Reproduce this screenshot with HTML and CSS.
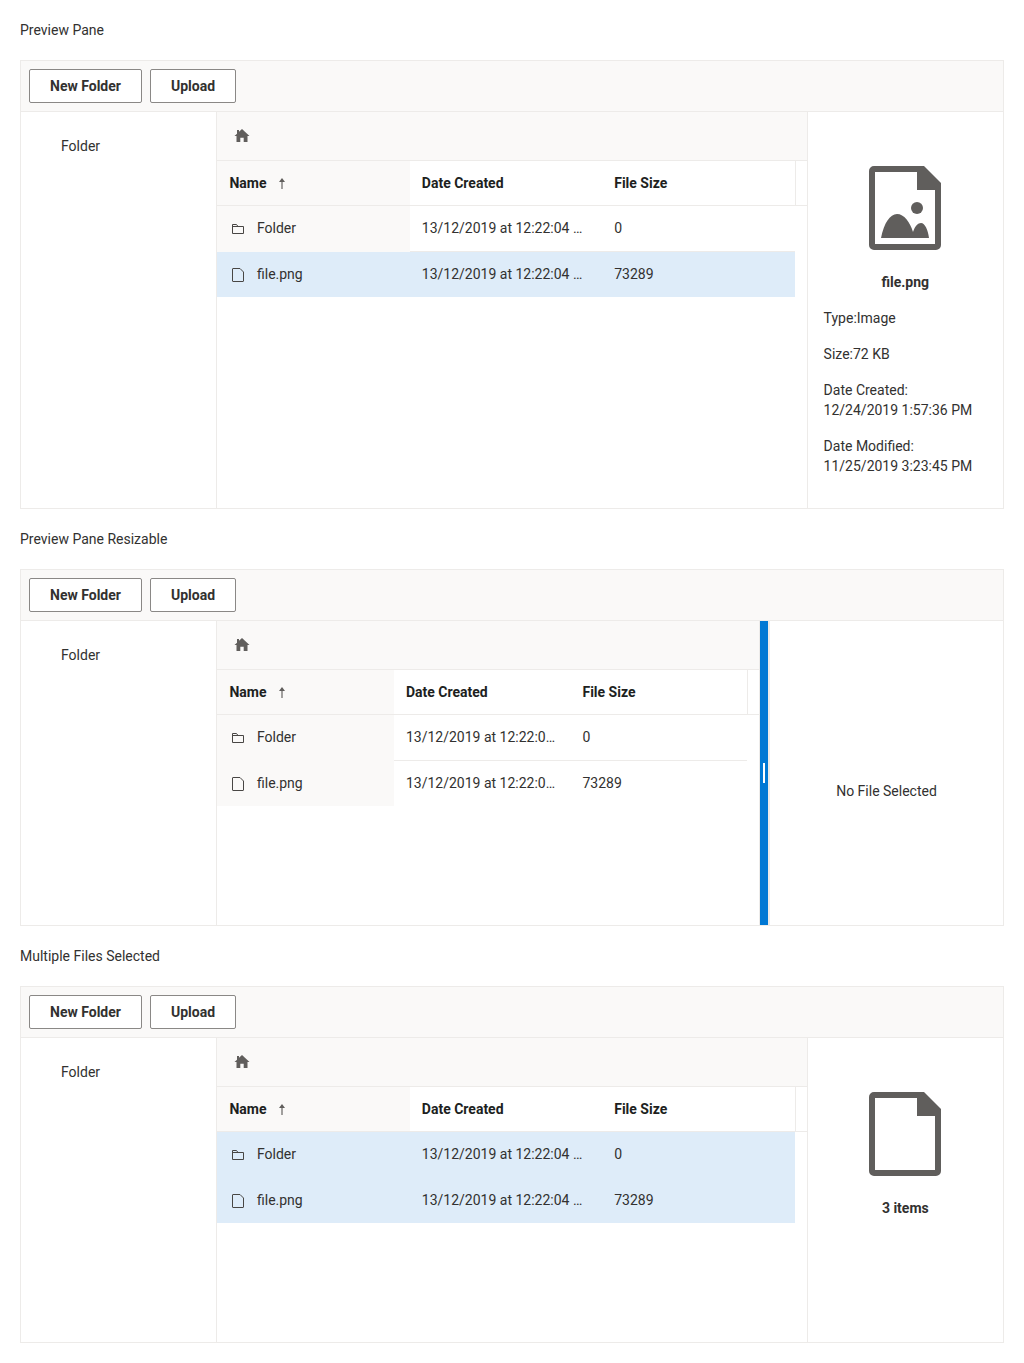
FILE: index.html
```html
<!DOCTYPE html>
<html lang="en">
<head>
<meta charset="utf-8">
<title>File Manager</title>
<link rel="stylesheet" href="styles.css">
</head>
<body>
<svg class="defs" width="0" height="0" aria-hidden="true">
  <symbol id="i-home" viewBox="0 0 16 16"><path d="M8 2 15.500 9H13.500V15H9.700V10.800H6.300V15H2.500V9H.5L3 6.700V3H5V4.800Z"/></symbol>
  <symbol id="i-folder" viewBox="0 0 14 12"><path class="line" d="M1.500 10.500V1.500H5.500L7 3.500H12.500V10.500ZM1.500 3.500H7"/></symbol>
  <symbol id="i-page" viewBox="0 0 14 16"><path class="line" d="M2 14.500a.5.500 0 0 1-.5-.5V2a.5.500 0 0 1 .5-.5H9L12.500 5V14a.5.500 0 0 1-.5.500Z"/></symbol>
  <symbol id="i-sort" viewBox="0 0 8 11"><path class="line" d="M4 11V1.500"/><path class="solid" d="M4 0 7 4H1Z"/></symbol>
  <symbol id="i-big-image" viewBox="0 0 72 84"><path fill-rule="evenodd" d="M5 0H55L72 17V79a5 5 0 0 1-5 5H5a5 5 0 0 1-5-5V5a5 5 0 0 1 5-5ZM6 6V78H66V24H48V6Z"/><circle cx="48" cy="42" r="6"/><path d="M12 72C15 57 21 48 28 48C35 48 41 56 44 66C46 60 49 57 52 57C56 57 59 64 60 72Z"/></symbol>
  <symbol id="i-big-page" viewBox="0 0 72 84"><path fill-rule="evenodd" d="M5 0H55L72 17V79a5 5 0 0 1-5 5H5a5 5 0 0 1-5-5V5a5 5 0 0 1 5-5ZM6 6V78H66V24H48V6Z"/></symbol>
</svg>

<h2 class="title">Preview Pane</h2>
<section class="fm fm-tall">
  <div class="toolbar"><button class="btn">New Folder</button><button class="btn">Upload</button></div>
  <div class="body">
    <nav class="tree">Folder</nav>
    <div class="main">
      <div class="crumb"><svg class="home"><use href="#i-home"/></svg></div>
      <div class="head">
        <div class="hc hc-name">Name <svg class="sort"><use href="#i-sort"/></svg></div>
        <div class="hc">Date Created</div>
        <div class="hc">File Size</div>
        <div class="gutter"></div>
      </div>
      <div class="list">
        <div class="row">
          <div class="c c-name"><svg class="ic-folder"><use href="#i-folder"/></svg>Folder</div>
          <div class="c"><span class="trunc">13/12/2019 at 12:22:04 PM</span></div>
          <div class="c">0</div>
        </div>
        <div class="row sel">
          <div class="c c-name"><svg class="ic-page"><use href="#i-page"/></svg>file.png</div>
          <div class="c"><span class="trunc">13/12/2019 at 12:22:04 PM</span></div>
          <div class="c">73289</div>
        </div>
      </div>
    </div>
    <aside class="preview">
      <svg class="big"><use href="#i-big-image"/></svg>
      <div class="pname">file.png</div>
      <div class="meta">
        <p>Type:Image</p>
        <p>Size:72 KB</p>
        <p>Date Created:<br>12/24/2019 1:57:36 PM</p>
        <p>Date Modified:<br>11/25/2019 3:23:45 PM</p>
      </div>
    </aside>
  </div>
</section>

<h2 class="title">Preview Pane Resizable</h2>
<section class="fm">
  <div class="toolbar"><button class="btn">New Folder</button><button class="btn">Upload</button></div>
  <div class="body">
    <nav class="tree">Folder</nav>
    <div class="main main-bordered">
      <div class="crumb"><svg class="home"><use href="#i-home"/></svg></div>
      <div class="head">
        <div class="hc hc-name">Name <svg class="sort"><use href="#i-sort"/></svg></div>
        <div class="hc">Date Created</div>
        <div class="hc">File Size</div>
        <div class="gutter"></div>
      </div>
      <div class="list">
        <div class="row">
          <div class="c c-name"><svg class="ic-folder"><use href="#i-folder"/></svg>Folder</div>
          <div class="c"><span class="trunc">13/12/2019 at 12:22:04 PM</span></div>
          <div class="c">0</div>
        </div>
        <div class="row">
          <div class="c c-name"><svg class="ic-page"><use href="#i-page"/></svg>file.png</div>
          <div class="c"><span class="trunc">13/12/2019 at 12:22:04 PM</span></div>
          <div class="c">73289</div>
        </div>
      </div>
    </div>
    <div class="splitter"><span class="grip"></span></div>
    <aside class="preview preview-wide">
      <div class="pnone">No File Selected</div>
    </aside>
  </div>
</section>

<h2 class="title">Multiple Files Selected</h2>
<section class="fm">
  <div class="toolbar"><button class="btn">New Folder</button><button class="btn">Upload</button></div>
  <div class="body">
    <nav class="tree">Folder</nav>
    <div class="main">
      <div class="crumb"><svg class="home"><use href="#i-home"/></svg></div>
      <div class="head">
        <div class="hc hc-name">Name <svg class="sort"><use href="#i-sort"/></svg></div>
        <div class="hc">Date Created</div>
        <div class="hc">File Size</div>
        <div class="gutter"></div>
      </div>
      <div class="list">
        <div class="row sel">
          <div class="c c-name"><svg class="ic-folder"><use href="#i-folder"/></svg>Folder</div>
          <div class="c"><span class="trunc">13/12/2019 at 12:22:04 PM</span></div>
          <div class="c">0</div>
        </div>
        <div class="row sel">
          <div class="c c-name"><svg class="ic-page"><use href="#i-page"/></svg>file.png</div>
          <div class="c"><span class="trunc">13/12/2019 at 12:22:04 PM</span></div>
          <div class="c">73289</div>
        </div>
      </div>
    </div>
    <aside class="preview">
      <svg class="big"><use href="#i-big-page"/></svg>
      <div class="pname">3 items</div>
    </aside>
  </div>
</section>
</body>
</html>
```
FILE: styles.css
```css
* { box-sizing: border-box; }
html, body { background: #fff; }
body {
  margin: 0;
  padding: 0 20px 20px;
  font: 400 14px/20px Roboto, "Liberation Sans", sans-serif;
  color: #323130;
}
.defs { position: absolute; }
.title {
  margin: 0;
  height: 60px;
  display: flex;
  align-items: center;
  font: inherit;
}
.fm {
  height: 357px;
  border: 1px solid #edebe9;
  display: flex;
  flex-direction: column;
}
.fm-tall { height: 449px; }
.toolbar {
  flex: none;
  display: flex;
  gap: 8px;
  padding: 8px;
  height: 51px;
  background: #faf9f8;
  border-bottom: 1px solid #edebe9;
}
.btn {
  height: 34px;
  padding: 0 20px;
  background: #fff;
  border: 1px solid #8a8886;
  border-radius: 2px;
  font: 700 14px/20px Roboto, "Liberation Sans", sans-serif;
  color: #323130;
}
.body { flex: 1; display: flex; min-height: 0; }
.tree {
  flex: none;
  width: 20%;
  padding: 24px 0 0 40px;
  border-right: 1px solid #edebe9;
}
.main { flex: 1; min-width: 0; display: flex; flex-direction: column; }
.main-bordered { border-right: 1px solid #edebe9; }
.crumb {
  flex: none;
  height: 49px;
  padding: 15px 0 0 16.6px;
  background: #faf9f8;
  border-bottom: 1px solid #edebe9;
}
.home { display: block; width: 16px; height: 16px; fill: #605e5c; }
.head, .row {
  display: grid;
  grid-template-columns: 1fr 1fr 1fr;
}
.head {
  flex: none;
  height: 45px;
  grid-template-columns: 1fr 1fr 1fr 12px;
  border-bottom: 1px solid #edebe9;
}
.hc {
  display: flex;
  align-items: center;
  padding-left: 12px;
  font-weight: 700;
  color: #201f1e;
  min-width: 0;
}
.hc-name { background: #faf9f8; }
.gutter { border-left: 1px solid #edebe9; }
.list { margin-right: 12px; }
.row { height: 46px; border-bottom: 1px solid #edebe9; }
.row:last-child { height: 45px; border-bottom: 0; }
.row.sel { background: #deecf9; border-bottom-color: #deecf9; }
.c {
  display: flex;
  align-items: center;
  padding: 0 12px 1px;
  min-width: 0;
}
.c-name { background: #faf9f8; }
.row:not(:last-child) .c-name { margin-bottom: -1px; padding-bottom: 2px; }
.sel .c-name { background: transparent; }
.trunc { display: block; overflow: hidden; white-space: nowrap; text-overflow: ellipsis; }
.sort { width: 8px; height: 11px; margin-left: 12px; }
.line { fill: none; stroke: #484644; stroke-width: 1; }
.solid { fill: #605e5c; }
.sort .line { stroke: #605e5c; }
.ic-folder { flex: none; width: 14px; height: 12px; margin: 1px 12px 0 1.6px; }
.ic-page { flex: none; width: 14px; height: 16px; margin: 1px 12px 0 1.6px; }
.preview {
  flex: none;
  width: 20%;
  padding-top: 54px;
  border-left: 1px solid #edebe9;
}
.preview-wide { width: 234px; padding-top: 160px; }
.big { display: block; width: 72px; height: 84px; margin: 0 auto; fill: #605e5c; }
.pname { margin-top: 22px; text-align: center; font-weight: 700; }
.pnone { text-align: center; }
.meta { padding: 16px 16px 0; }
.meta p { margin: 0 0 16px; }
.splitter {
  flex: none;
  width: 9px;
  background: #0078d4;
  border-right: 1px solid #edebe9;
  padding: 142px 0 0 3px;
}
.grip { display: block; width: 2px; height: 20px; background: #fff; }
```
